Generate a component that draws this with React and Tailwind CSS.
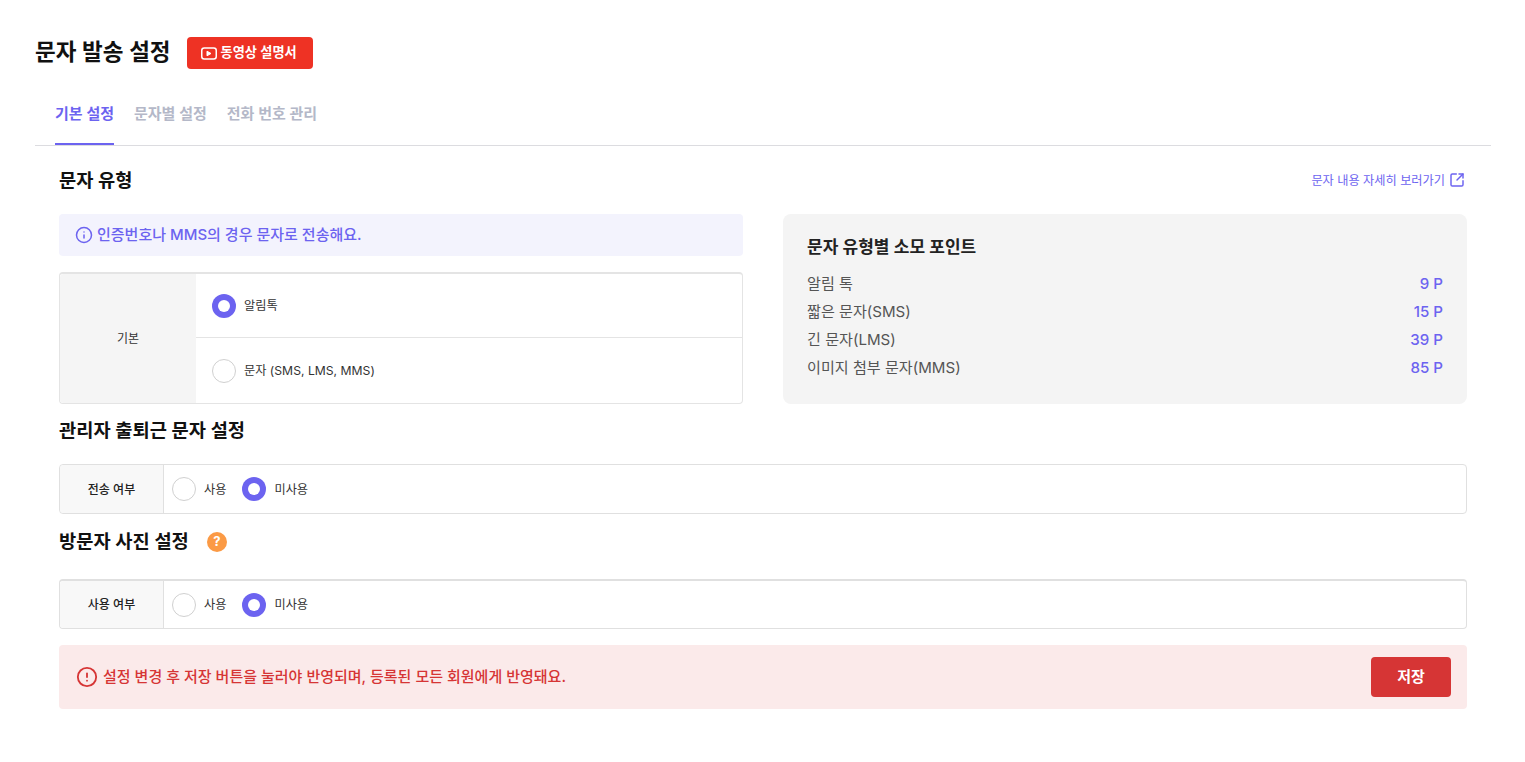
import { Info, SquareArrowOutUpRight, CircleAlert } from 'lucide-react'

const font = { fontFamily: 'Inter, "Noto Sans CJK KR", sans-serif' }

const points = [
  ['알림 톡', '9 P'],
  ['짧은 문자(SMS)', '15 P'],
  ['긴 문자(LMS)', '39 P'],
  ['이미지 첨부 문자(MMS)', '85 P'],
]

function Radio({ checked, label }) {
  return (
    <label className="flex items-center gap-2">
      {checked ? (
        <span className="flex h-6 w-6 items-center justify-center rounded-full bg-[#6c63f0]">
          <span className="h-3 w-3 rounded-full bg-white" />
        </span>
      ) : (
        <span className="h-6 w-6 rounded-full border border-[#d0d0d0] bg-white" />
      )}
      <span className="pt-[2px] text-[12.2px] text-[#333333]">{label}</span>
    </label>
  )
}

function SettingRow({ title, thick }) {
  return (
    <div className={thick ? 'flex h-[50px] rounded border border-t-2 border-[#e0e0e0]' : 'flex h-[50px] rounded border border-[#e0e0e0]'}>
      <div className="flex w-[104px] items-center justify-center rounded-l border-r border-[#e0e0e0] bg-[#f8f8f8] pt-[1px] text-xs font-medium text-[#222222]">
        {title}
      </div>
      <div className="flex items-center gap-4 pl-2">
        <Radio label="사용" />
        <Radio checked label="미사용" />
      </div>
    </div>
  )
}

function App() {
  return (
    <div className="h-[762px] bg-white pl-[35px] pr-[34px] pt-[37px]" style={font}>
      {/* Header */}
      <div className="flex h-8 items-center">
        <h1 className="pb-[2px] text-[22.5px] font-semibold text-[#111111]">문자 발송 설정</h1>
        <button className="ml-4 flex h-8 w-[126px] items-center gap-1 rounded bg-[#ee3224] pl-[14px] text-[13.2px] font-semibold text-white">
          <svg width="16" height="13" viewBox="0 0 16 13" fill="none">
            <rect x="0.75" y="1" width="14.5" height="11" rx="2.5" stroke="white" strokeWidth="1.5" />
            <path d="M6 4.2v4.6l4-2.3z" fill="white" stroke="white" strokeWidth="1" strokeLinejoin="round" />
          </svg>
          동영상 설명서
        </button>
      </div>

      {/* Tabs */}
      <div className="mt-8 flex h-[45px] gap-5 border-b border-[#dcdce0] pl-5">
        <div className="h-[44px] border-b-2 border-[#6c63f0] pt-[2px] text-[15px] font-semibold text-[#6c63f0]">기본 설정</div>
        <div className="pt-[2px] text-[15px] font-semibold text-[#b4b8c8]">문자별 설정</div>
        <div className="pt-[2px] text-[15px] font-semibold text-[#b4b8c8]">전화 번호 관리</div>
      </div>

      <div className="px-6">
        {/* 문자 유형 */}
        <div className="mt-5 flex h-7 items-center justify-between">
          <h2 className="pt-[2px] text-[18.7px] font-semibold text-[#111111]">문자 유형</h2>
          <a className="flex items-center gap-1 pr-[2px] text-[12.2px] text-[#6c63f0]">
            <span className="pt-[2px]">문자 내용 자세히 보러가기</span>
            <SquareArrowOutUpRight size={16} strokeWidth={2.2} />
          </a>
        </div>

        <div className="mt-5 grid h-[190px] grid-cols-2 gap-10">
          <div>
            <div className="flex h-[42px] items-center gap-[4px] rounded bg-[#f3f3fd] pl-[16px] text-[15px] font-medium text-[#6c63f0]">
              <Info size={18} />
              인증번호나 MMS의 경우 문자로 전송해요.
            </div>
            <div className="mt-4 flex h-[132px] rounded border border-t-2 border-[#e4e4e4]">
              <div className="flex w-[136px] items-center justify-center rounded-l bg-[#f5f5f5] text-xs text-[#333333]">기본</div>
              <div className="flex flex-1 flex-col">
                <div className="flex h-[64px] items-center border-b border-[#e4e4e4] pl-4">
                  <Radio checked label="알림톡" />
                </div>
                <div className="flex flex-1 items-center pl-4">
                  <Radio label="문자 (SMS, LMS, MMS)" />
                </div>
              </div>
            </div>
          </div>

          <div className="rounded-lg bg-[#f4f4f4] px-6 pt-[21px]">
            <h3 className="text-[17px] font-semibold text-[#222222]">문자 유형별 소모 포인트</h3>
            <div className="mt-[10px]">
              {points.map(([name, value]) => (
                <div key={name} className="flex h-7 items-center justify-between text-[15.1px]">
                  <span className="text-[#555555]">{name}</span>
                  <span className="font-medium text-[#6c63f0]">{value}</span>
                </div>
              ))}
            </div>
          </div>
        </div>

        {/* 관리자 출퇴근 */}
        <h2 className="mt-3 flex h-7 items-center pt-[2px] text-[18.7px] font-semibold text-[#111111]">관리자 출퇴근 문자 설정</h2>
        <div className="mt-5">
          <SettingRow title="전송 여부" />
        </div>

        {/* 방문자 사진 */}
        <div className="mt-[13px] flex h-7 items-center gap-[18px]">
          <h2 className="pt-[2px] text-[18.7px] font-semibold text-[#111111]">방문자 사진 설정</h2>
          <span className="mt-[2px] flex h-5 w-5 items-center justify-center rounded-full bg-[#fb9a45] text-[13px] font-bold text-white">?</span>
        </div>
        <div className="mt-6">
          <SettingRow thick title="사용 여부" />
        </div>

        {/* Notice */}
        <div className="mt-4 flex h-16 items-center justify-between rounded bg-[#fbeaea] pl-[17px] pr-4">
          <div className="flex items-center gap-[5px] text-[15px] font-medium text-[#d63535]">
            <CircleAlert size={22} strokeWidth={2} />
            설정 변경 후 저장 버튼을 눌러야 반영되며, 등록된 모든 회원에게 반영돼요.
          </div>
          <button className="h-10 w-20 rounded bg-[#d63535] text-[15px] font-semibold text-white">저장</button>
        </div>
      </div>
    </div>
  )
}

export default App
